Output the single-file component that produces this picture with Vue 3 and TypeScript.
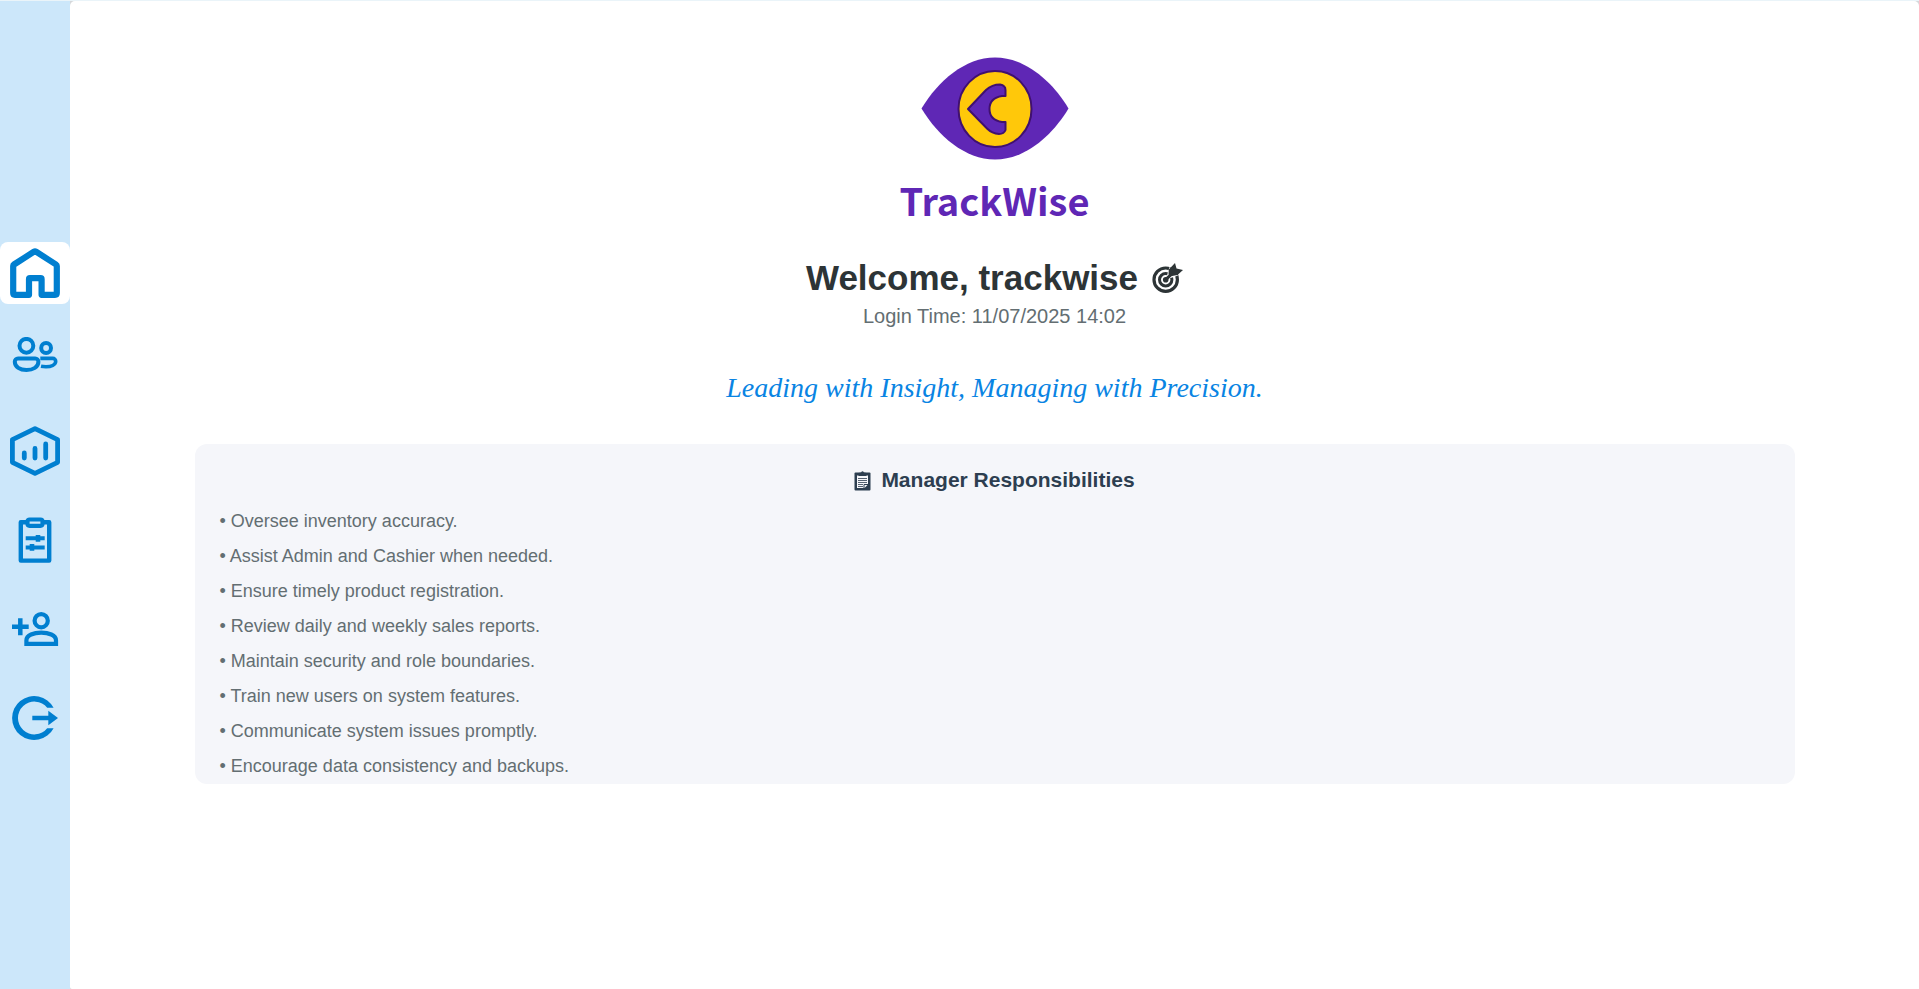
<script setup lang="ts">
import { ref } from 'vue'

type IconName = 'home' | 'users' | 'reports' | 'inventory' | 'register' | 'logout'

interface NavItem {
  icon: IconName
  label: string
}

const navItems: NavItem[] = [
  { icon: 'home', label: 'Home' },
  { icon: 'users', label: 'Users' },
  { icon: 'reports', label: 'Reports' },
  { icon: 'inventory', label: 'Inventory' },
  { icon: 'register', label: 'Register user' },
  { icon: 'logout', label: 'Log out' },
]

const active = ref<IconName>('home')

const responsibilities: string[] = [
  'Oversee inventory accuracy.',
  'Assist Admin and Cashier when needed.',
  'Ensure timely product registration.',
  'Review daily and weekly sales reports.',
  'Maintain security and role boundaries.',
  'Train new users on system features.',
  'Communicate system issues promptly.',
  'Encourage data consistency and backups.',
]
</script>

<template>
  <div class="app">
    <nav class="sidebar">
      <button
        v-for="item in navItems"
        :key="item.icon"
        type="button"
        class="nav-button"
        :class="{ active: active === item.icon }"
        :aria-label="item.label"
        @click="active = item.icon"
      >
        <svg class="nav-icon" viewBox="0 0 50 50" aria-hidden="true">
          <path
            v-if="item.icon === 'home'"
            d="M3.200 18Q3.200 17 4 16.500L24 3.700Q25 3.100 26 3.700L46 16.500Q46.800 17 46.800 18V45Q46.800 46.800 45 46.800H31.600V31.200Q31.600 30.200 30.600 30.200H20Q19 30.200 19 31.200V46.800H5Q3.200 46.800 3.200 45Z"
            stroke-width="6.200"
            stroke-linejoin="round"
          />
          <g v-else-if="item.icon === 'users'" stroke-width="4">
            <circle cx="16.4" cy="8.8" r="6.9" />
            <circle cx="36.1" cy="11" r="4.9" />
            <path d="M8 21.5H25.2a3.2 3.2 0 0 1 3.2 3.2C28.4 30 23 33 16.5 33S4.8 30 4.8 24.7A3.2 3.2 0 0 1 8 21.5Z" />
            <path d="M30.3 21.4H42.8a2.9 2.9 0 0 1 2.9 2.9C45.7 28 41 29.7 36 29.7Q33 29.7 31 29.3" stroke-width="3.6" />
          </g>
          <g v-else-if="item.icon === 'reports'" stroke-width="4.8">
            <path d="M25 2.6 47.6 13.7V36.3L25 47.4 2.4 36.3V13.7Z" stroke-linejoin="round" />
            <path d="M14.3 27V32M25 22.5V32M35.7 18V32" stroke-linecap="round" />
          </g>
          <g v-else-if="item.icon === 'inventory'">
            <path d="M18 7.2H10.8V45.6H39.2V7.2H32" stroke-width="4.4" stroke-linejoin="round" />
            <rect x="17.5" y="4.5" width="15" height="6.3" rx="2" stroke-width="4.2" />
            <path d="M15.7 23.3H34.7M15.7 32.4H34.7" stroke-width="4" />
            <path d="M28 20V26.7M22 29V35.7" stroke-width="4.6" />
          </g>
          <g v-else-if="item.icon === 'register'" stroke-width="4.2">
            <circle cx="31.2" cy="16.7" r="6.6" />
            <path d="M16.4 39.9V36.5C16.4 31 24 28.7 31.2 28.7S46 31 46 36.5V39.9Z" />
            <path d="M2 22.7H18.7M10.3 14.3V31.3" stroke-width="4.5" />
          </g>
          <g v-else>
            <path
              class="solid"
              d="M43.6 14.8H37.2A16.4 16.4 0 1 0 37.200 35.200H43.6A22 22 0 1 1 43.6 14.8Z"
            />
            <path d="M22.3 25H40" stroke-width="4.5" />
            <path class="solid" d="M38.3 17.7 48 25 38.3 32.2Z" />
          </g>
        </svg>
      </button>
    </nav>

    <main class="content">
      <div class="brand">
        <svg class="brand-eye" viewBox="0 0 148 103" aria-hidden="true">
          <path
            d="M0.5 51.500C17 24 44 0.500 74 0.500S131 24 147.500 51.500C131 79 104 102.500 74 102.500S17 79 0.500 51.500Z"
            fill="#5f27b5"
          />
          <ellipse cx="74" cy="52" rx="36.500" ry="38" fill="#ffc80a" stroke="#40106f" stroke-width="2" />
          <path
            d="M47 52 65 33Q71 27.500 79 27.500Q84.500 28.500 84.500 33V39H81Q68.500 41 68.500 52T81 65H84.500V73Q83 77 78 77Q71 76.500 66 71.500Z"
            fill="#5f27b5"
            stroke="#40106f"
            stroke-width="2"
            stroke-linejoin="round"
          />
        </svg>
        <span class="brand-name">TrackWise</span>
      </div>

      <h1 class="welcome">
        Welcome, trackwise
        <svg class="target-icon" viewBox="0 0 31 30" aria-hidden="true">
          <g fill="none" stroke="#2d3436">
            <circle cx="13.700" cy="16.700" r="11.700" stroke-width="3.200" />
            <circle cx="13.700" cy="16.700" r="6.200" stroke-width="3" />
          </g>
          <path d="M13.700 16.700 17.500 4 26 12.500Z" fill="#fff" />
          <circle cx="13.700" cy="16.700" r="2.800" fill="#2d3436" />
          <path d="M13.700 16.700 22 8.800" stroke="#2d3436" stroke-width="3" />
          <path d="M16.500 11.500 16.800 6.500 23 0 24.500 5.500 31 7 25.500 12 20 13Z" fill="#2d3436" />
        </svg>
      </h1>
      <p class="login-time">Login Time: 11/07/2025 14:02</p>
      <p class="tagline">Leading with Insight, Managing with Precision.</p>

      <section class="card">
        <h2 class="card-title">
          <svg class="clipboard-icon" viewBox="0 0 17 22" aria-hidden="true">
            <rect x="0.500" y="3.500" width="16" height="18" rx="1" fill="#2d3e50" />
            <path d="M3 6.500H14V15.500L10.500 19H3Z" fill="#f5f6fa" />
            <path d="M4.500 5.500V4L7 3.500Q8.500 1.200 10 3.500L12.500 4V7H4.500Z" fill="#2d3e50" />
            <path d="M4 9.500H13M4 11.500H13M4 13.500H13M4 15.500H9M4 17.500H9" stroke="#2d3e50" stroke-width="0.800" />
            <path d="M10 19V15.500H14" fill="none" stroke="#2d3e50" stroke-width="1" />
          </svg>
          Manager Responsibilities
        </h2>
        <ul class="duties">
          <li v-for="duty in responsibilities" :key="duty">• {{ duty }}</li>
        </ul>
      </section>
    </main>
  </div>
</template>

<style>
body {
  margin: 0;
}
</style>

<style scoped>
.app {
  box-sizing: border-box;
  display: flex;
  min-height: 100vh;
  border-top: 1px solid #eaf4f9;
  background: #d5d8db;
  font-family: "Liberation Sans", Arial, sans-serif;
}

.sidebar {
  display: flex;
  flex: 0 0 70px;
  flex-direction: column;
  justify-content: center;
  gap: 27px;
  background: #cce7fa;
}

.nav-button {
  display: flex;
  align-items: center;
  justify-content: center;
  height: 62px;
  padding: 0;
  border: 0;
  border-radius: 8px;
  background: transparent;
  cursor: pointer;
}

.nav-button.active {
  background: #fff;
}

.nav-icon {
  width: 50px;
  height: 50px;
  fill: none;
  stroke: #007fd0;
}

.solid {
  fill: #007fd0;
  stroke: none;
}

.content {
  display: flex;
  flex: 1;
  flex-direction: column;
  align-items: center;
  padding: 56px 120px 0;
  border-radius: 5px 5px 0 2px;
  background: #fff;
}

.brand {
  display: flex;
  flex-direction: column;
  align-items: center;
}

.brand-eye {
  width: 148px;
  height: 103px;
}

.brand-name {
  margin-top: 12px;
  color: #5f27b5;
  font-family: "Noto Sans CJK SC", sans-serif;
  font-size: 38px;
  font-weight: 700;
  line-height: 56px;
}

.welcome {
  display: flex;
  align-items: center;
  gap: 14px;
  margin: 30px 0 0;
  color: #2d3436;
  font-size: 35px;
  line-height: 40px;
}

.target-icon {
  width: 31px;
  height: 30px;
}

.login-time {
  margin: 6px 0 0;
  color: #636e72;
  font-size: 20px;
  line-height: 24px;
}

.tagline {
  margin: 44px 0 0;
  color: #0984e3;
  font-family: Georgia, "Liberation Serif", serif;
  font-size: 28px;
  font-style: italic;
  line-height: 32px;
}

.card {
  box-sizing: border-box;
  width: 100%;
  max-width: 1600px;
  margin-top: 40px;
  padding: 20px 25px 0;
  border-radius: 12px;
  background: #f5f6fa;
}

.card-title {
  display: flex;
  align-items: center;
  justify-content: center;
  gap: 10px;
  margin: 0 0 8px;
  color: #2d3e50;
  font-size: 21px;
  line-height: 32px;
}

.clipboard-icon {
  width: 17px;
  height: 22px;
}

.duties {
  margin: 0;
  padding: 0;
  color: #636e72;
  font-size: 18px;
  line-height: 35px;
  list-style: none;
}
</style>
